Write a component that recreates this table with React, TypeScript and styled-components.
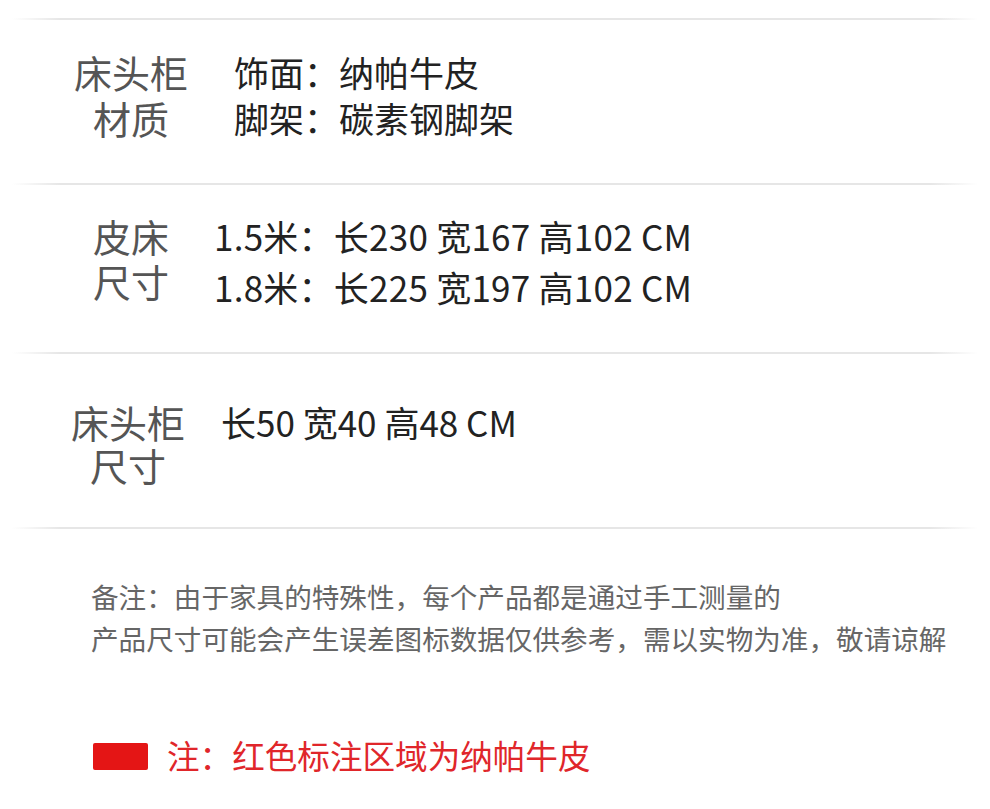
import React from 'react'
import styled, { createGlobalStyle } from 'styled-components'

const GlobalStyle = createGlobalStyle`
  html, body {
    margin: 0;
    padding: 0;
    background: #ffffff;
  }
  body {
    font-family: "Noto Sans CJK SC", "Noto Sans", sans-serif;
  }
`

const Page = styled.div`
  width: 990px;
  padding-top: 18px;
  background: #fff;
`

const Divider = styled.div`
  height: 2px;
  margin: 0 12px;
  background: linear-gradient(
    to right,
    rgba(228, 228, 228, 0) 0%,
    #e6e6e6 5%,
    #e6e6e6 95%,
    rgba(228, 228, 228, 0) 100%
  );
`

const Section = styled.div<{ $top: number; $bottom: number; $left?: number }>`
  display: flex;
  align-items: flex-start;
  padding: ${(p) => p.$top}px 0 ${(p) => p.$bottom}px ${(p) => p.$left ?? 71}px;
`

const Label = styled.div<{ $lh: number; $shift?: number }>`
  width: 120px;
  flex-shrink: 0;
  text-align: center;
  font-size: 38px;
  line-height: ${(p) => p.$lh}px;
  color: #555;
  margin-top: ${(p) => p.$shift || 0}px;
`

const Line = styled.div`
  white-space: nowrap;
`

const Values = styled.div<{ $gap: number; $lh: number; $spacing?: number }>`
  margin-left: ${(p) => p.$gap}px;
  font-size: 35px;
  line-height: ${(p) => p.$lh}px;
  letter-spacing: ${(p) => p.$spacing ?? 0}px;
  color: #222;
`

const Notes = styled.div`
  margin: 46px 0 0 91px;
  font-size: 27.6px;
  line-height: 42px;
  color: #666;
`

const Legend = styled.div`
  display: flex;
  align-items: center;
  margin: 76px 0 0 93px;
  height: 40px;
  padding-bottom: 32px;
`

const Swatch = styled.span`
  width: 55px;
  height: 27px;
  margin-top: 2px;
  border-radius: 2px;
  background: #e41515;
  margin-right: 19px;
`

const LegendText = styled.span`
  font-size: 32.6px;
  line-height: 40px;
  color: #e0262a;
`

export default function App() {
  return (
    <Page>
      <GlobalStyle />
      <Divider />
      <Section $top={29} $bottom={42}>
        <Label $lh={46}>
          <Line>床头柜</Line>
          <Line>材质</Line>
        </Label>
        <Values $gap={43} $lh={46}>
          <Line>饰面：纳帕牛皮</Line>
          <Line>脚架：碳素钢脚架</Line>
        </Values>
      </Section>
      <Divider />
      <Section $top={25} $bottom={40}>
        <Label $lh={45} $shift={3}>
          <Line>皮床</Line>
          <Line>尺寸</Line>
        </Label>
        <Values $gap={23} $lh={51} $spacing={0.25}>
          <Line>1.5米：长230 宽167 高102 CM</Line>
          <Line>1.8米：长225 宽197 高102 CM</Line>
        </Values>
      </Section>
      <Divider />
      <Section $top={46} $bottom={41} $left={68}>
        <Label $lh={43}>
          <Line>床头柜</Line>
          <Line>尺寸</Line>
        </Label>
        <Values $gap={33} $lh={43}>
          <Line>长50 宽40 高48 CM</Line>
        </Values>
      </Section>
      <Divider />
      <Notes>
        <Line>备注：由于家具的特殊性，每个产品都是通过手工测量的</Line>
        <Line>产品尺寸可能会产生误差图标数据仅供参考，需以实物为准，敬请谅解</Line>
      </Notes>
      <Legend>
        <Swatch />
        <LegendText>注：红色标注区域为纳帕牛皮</LegendText>
      </Legend>
    </Page>
  )
}
